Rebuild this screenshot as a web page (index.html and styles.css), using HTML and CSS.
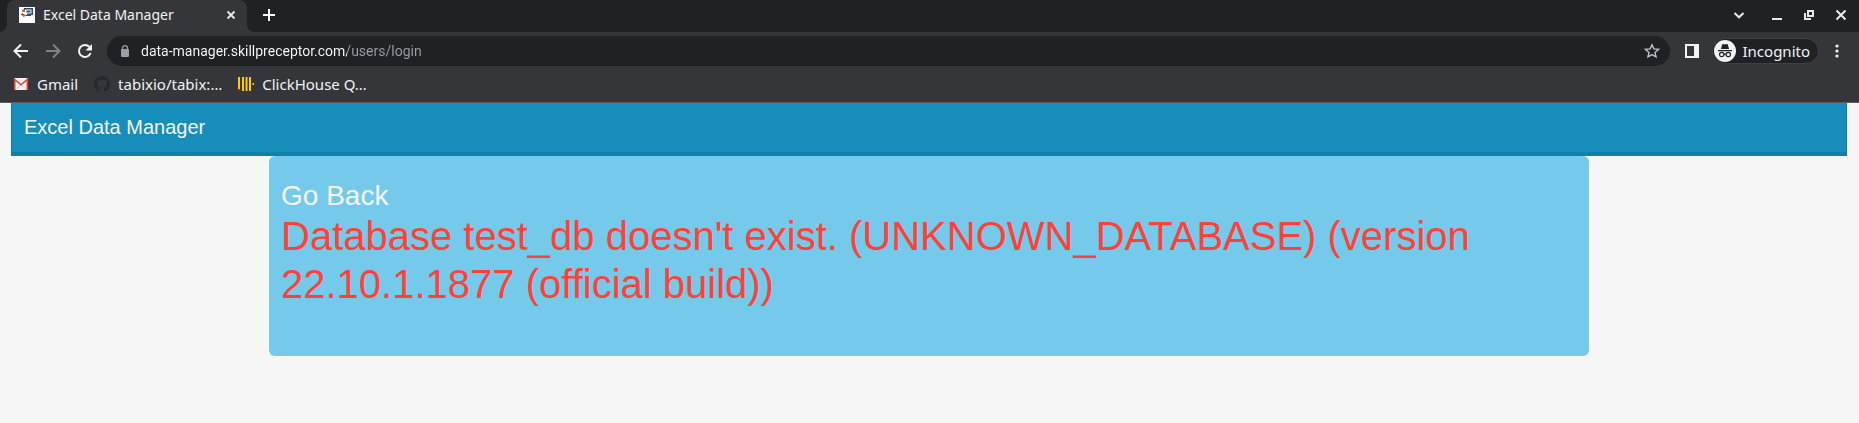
FILE: index.html
```html
<!DOCTYPE html>
<html lang="en">
<head>
<meta charset="utf-8">
<title>Excel Data Manager</title>
<link rel="stylesheet" href="styles.css">
</head>
<body>
<header class="browser">
  <div class="tabstrip">
    <div class="tab">
      <svg class="icon16" viewBox="0 0 16 16" aria-hidden="true"><path fill="#fff" d="M0 0h16v16H0z"/><path fill="#24496b" d="M5 1h9v7H8V6.500h4.500V2.500H6V4H4z"/><path fill="#9bb3c8" d="M7 3h5v3H7z"/><path fill="#24496b" d="M8 4h3v1H8zM3 6l3 2-1 1-3-1zM7 8h5v1H7z"/><path fill="#d9683c" d="M3 3h3v2H3zM3 7l3 1 1-1v2l-3 1z"/></svg>
      <span class="tab-title">Excel Data Manager</span>
      <button class="plain tab-close" aria-label="Close tab"><svg width="10" height="10" viewBox="0 0 10 10"><path d="M1.500 1.500l7 7M8.500 1.500l-7 7" stroke="#e8eaed" stroke-width="1.800"/></svg></button>
    </div>
    <button class="plain new-tab" aria-label="New tab"><svg width="12" height="12" viewBox="0 0 12 12"><path d="M6 0v12M0 6h12" stroke="#fff" stroke-width="2"/></svg></button>
    <div class="window-controls">
      <button class="plain" aria-label="Search tabs"><svg width="12" height="12" viewBox="0 0 12 12"><path d="M1.500 4L6 8.300 10.500 4" fill="none" stroke="#e8eaed" stroke-width="2"/></svg></button>
      <button class="plain" aria-label="Minimize"><svg width="12" height="12" viewBox="0 0 12 12"><path d="M1 9h10v2H1z" fill="#e8eaed"/></svg></button>
      <button class="plain" aria-label="Restore"><svg width="12" height="12" viewBox="0 0 12 12"><path d="M5 2h5v5H5zM2 4v6h6" fill="none" stroke="#e8eaed" stroke-width="2"/></svg></button>
      <button class="plain" aria-label="Close window"><svg width="12" height="12" viewBox="0 0 12 12"><path d="M1.500 1.500l9 9M10.500 1.500l-9 9" stroke="#e8eaed" stroke-width="2"/></svg></button>
    </div>
  </div>
  <div class="toolbar">
    <div class="nav-buttons">
      <button class="plain" aria-label="Back"><svg width="16" height="16" viewBox="0 0 16 16"><path d="M15 8H2M8 1.500L1.500 8 8 14.500" fill="none" stroke="#f1f3f4" stroke-width="2"/></svg></button>
      <button class="plain" aria-label="Forward"><svg width="16" height="16" viewBox="0 0 16 16"><path d="M1 8h13M8 1.500L14.500 8 8 14.500" fill="none" stroke="#818387" stroke-width="2"/></svg></button>
      <button class="plain" aria-label="Reload"><svg width="16" height="16" viewBox="0 0 16 16"><path d="M13.600 10A6 6 0 1 1 12.300 3.800" fill="none" stroke="#f1f3f4" stroke-width="2"/><path d="M15 1v6.500H8.500z" fill="#f1f3f4"/></svg></button>
    </div>
    <div class="omnibox">
      <svg width="10" height="12" viewBox="0 0 10 12" aria-hidden="true"><path d="M2.500 5V3.200a2.500 2.500 0 0 1 5 0V5" fill="none" stroke="#9aa0a6" stroke-width="1.300"/><rect x="1" y="4" width="8" height="8" rx="1" fill="#9aa0a6"/></svg>
      <input class="url" type="text" aria-label="Address" value="data-manager.skillpreceptor.com/users/login">
      <button class="plain" aria-label="Bookmark this tab"><svg width="16" height="16" viewBox="0 0 16 16"><path d="M8 1.800l1.900 4.100 4.500.5-3.400 3 1 4.500L8 11.600l-4 2.300 1-4.500-3.400-3 4.500-.5z" fill="none" stroke="#bdc1c6" stroke-width="1.400"/></svg></button>
    </div>
    <button class="plain side-panel" aria-label="Side panel"><svg width="14" height="14" viewBox="0 0 14 14"><path fill="#f1f3f4" fill-rule="evenodd" d="M0 0h14v14H0zM2 2v10h7V2z"/></svg></button>
    <button class="plain incognito"><svg width="22" height="22" viewBox="0 0 22 22" aria-hidden="true"><circle cx="11" cy="11" r="11" fill="#f1f3f4"/><path fill="#202124" d="M8.200 4.300h5.600L15 9H7zM4 10h14v1.200H4z"/><g fill="none" stroke="#202124" stroke-width="1.200"><circle cx="7.700" cy="14.500" r="2.200"/><circle cx="14.300" cy="14.500" r="2.200"/><path d="M9.900 14.300q1.100-.7 2.200 0"/></g></svg><span>Incognito</span></button>
    <button class="plain menu" aria-label="Menu"><svg width="4" height="14" viewBox="0 0 4 14"><g fill="#f1f3f4"><circle cx="2" cy="2" r="1.600"/><circle cx="2" cy="7" r="1.600"/><circle cx="2" cy="12" r="1.600"/></g></svg></button>
  </div>
  <nav class="bookmarks" aria-label="Bookmarks">
    <a href="#"><svg class="icon16" viewBox="0 0 16 16" aria-hidden="true"><path fill="#f1f1f1" d="M1 2h14v12H1z"/><path d="M3 13l5-4 5 4" stroke="#cfcfcf" fill="none"/><path d="M1.700 14V3.500l6.300 5.300 6.300-5.300V14" fill="none" stroke="#d9483b" stroke-width="1.600"/></svg><span>Gmail</span></a>
    <a href="#"><svg class="icon16" viewBox="0 0 16 16" aria-hidden="true"><path fill="#24292e" d="M8 0C3.580 0 0 3.580 0 8c0 3.540 2.290 6.530 5.470 7.590.4.070.55-.17.55-.38 0-.19-.01-.82-.01-1.490-2.010.37-2.530-.49-2.690-.94-.09-.23-.48-.94-.82-1.130-.28-.15-.68-.52-.01-.53.63-.01 1.080.58 1.230.82.72 1.210 1.870.87 2.330.66.070-.52.28-.87.51-1.070-1.780-.2-3.640-.89-3.640-3.950 0-.87.31-1.590.82-2.150-.08-.2-.36-1.020.08-2.120 0 0 .67-.21 2.200.82.640-.18 1.320-.27 2-.27s1.360.09 2 .27c1.530-1.040 2.200-.82 2.200-.82.44 1.100.16 1.920.08 2.120.51.56.82 1.270.82 2.150 0 3.070-1.870 3.750-3.650 3.950.29.25.54.73.54 1.480 0 1.070-.01 1.930-.01 2.200 0 .21.15.46.55.38A8.010 8.010 0 0 0 16 8c0-4.420-3.580-8-8-8z"/></svg><span>tabixio/tabix:…</span></a>
    <a href="#"><svg class="icon16" viewBox="0 0 16 16" aria-hidden="true"><path fill="#fc0" d="M0 1h2v12H0zM4 1h2v14H4zM7.500 1h2v14h-2zM11 1h2v14h-2zM14.500 7H16v2h-1.500z"/><path fill="#f00" d="M0 13h2v2H0z"/></svg><span>ClickHouse Q…</span></a>
  </nav>
</header>
<div class="page">
  <header class="site-header"><a href="#">Excel Data Manager</a></header>
  <main class="card">
    <a class="back" href="#">Go Back</a>
    <h1 class="error">Database test_db doesn't exist. (UNKNOWN_DATABASE) (version 22.10.1.1877 (official build))</h1>
  </main>
</div>
</body>
</html>
```
FILE: styles.css
```css
* { box-sizing: border-box; }
body {
  margin: 0;
  background: #f6f6f6;
  font-family: "Liberation Sans", Arial, sans-serif;
}
a { color: inherit; text-decoration: none; }
svg { display: block; flex: none; }
.plain {
  display: flex;
  align-items: center;
  justify-content: center;
  padding: 0;
  border: 0;
  background: none;
  color: inherit;
  font: inherit;
}
.icon16 { width: 16px; height: 16px; }

.browser {
  background: #35363a;
  border-bottom: 1px solid #5b5c60;
  color: #f1f3f4;
  font: 14px/20px "Noto Sans", sans-serif;
}
.tabstrip {
  display: flex;
  align-items: center;
  height: 32px;
  padding: 0 12px 0 7px;
  background: #202124;
}
.tab {
  position: relative;
  display: flex;
  align-items: center;
  width: 240px;
  height: 32px;
  padding: 0 10px 2px 12px;
  border-radius: 8px 8px 0 0;
  background: #35363a;
}
.tab::before, .tab::after {
  content: "";
  position: absolute;
  bottom: 0;
  width: 8px;
  height: 8px;
}
.tab::before { left: -8px; background: radial-gradient(circle at 0 0, transparent 8px, #35363a 8px); }
.tab::after { right: -8px; background: radial-gradient(circle at 100% 0, transparent 8px, #35363a 8px); }
.tab-title { flex: 1; margin-left: 8px; white-space: nowrap; }
.tab-close { width: 12px; height: 12px; }
.new-tab { margin-left: 16px; padding-bottom: 2px; }
.window-controls { display: flex; gap: 20px; margin-left: auto; padding-bottom: 2px; }
.window-controls .plain:first-child { margin-right: 6px; }

.toolbar {
  display: flex;
  align-items: center;
  height: 38px;
  padding: 0 20px 0 13px;
}
.nav-buttons { display: flex; gap: 16px; margin-right: 14px; }
.omnibox {
  display: flex;
  flex: 1;
  align-items: center;
  height: 30px;
  padding: 0 10px 0 13px;
  border-radius: 15px;
  background: #202124;
}
.url {
  flex: 1;
  min-width: 0;
  margin-left: 11px;
  padding: 0;
  border: 0;
  outline: 0;
  background: linear-gradient(to right, #fff 206px, #9aa0a6 206px);
  background-clip: text;
  -webkit-background-clip: text;
  color: transparent;
  font: 14px/20px Roboto, sans-serif;
}
.side-panel { margin-left: 15px; }
.incognito {
  gap: 7px;
  height: 26px;
  margin-left: 13px;
  padding: 0 8px 0 1px;
  border: 1px solid #3f4044;
  border-radius: 13px;
  background: #202124;
  font-size: 15px;
}
.menu { margin-left: 16px; }

.bookmarks {
  display: flex;
  align-items: center;
  gap: 16px;
  height: 32px;
  padding: 0 13px 5px;
  font-size: 15px;
}
.bookmarks a { display: flex; align-items: center; gap: 8px; }

.page { padding: 0 12px 0 11px; }
.site-header {
  padding: 9px 12px 10px 12px;
  border: solid #137fab;
  border-width: 0 1px 4px;
  background: #178dbb;
  color: #f6f6f6;
  font-size: 20px;
  line-height: 30px;
}
.card {
  max-width: 1320px;
  margin: 0 auto;
  padding: 23px 12px 48px;
  border-radius: 6px;
  background: #75caec;
}
.back {
  display: block;
  color: #f6f6f6;
  font-size: 28px;
  line-height: 33px;
}
.error {
  margin: 0;
  color: #ff4136;
  font-size: 40px;
  font-weight: 400;
  line-height: 48px;
}
```
